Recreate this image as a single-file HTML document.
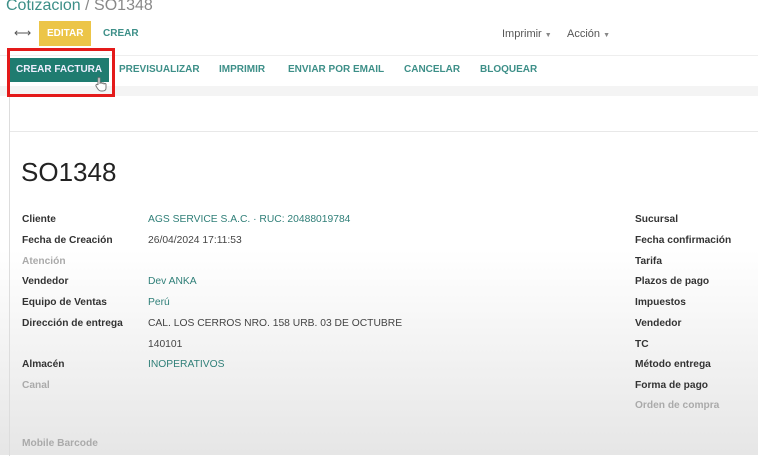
<!DOCTYPE html>
<html><head><meta charset="utf-8"><style>
body{margin:0;width:758px;height:455px;overflow:hidden;font-family:"Liberation Sans",sans-serif;background:linear-gradient(#fff 0,#fff 250px,#e6e6e6 455px);position:relative}
.a{position:absolute;white-space:nowrap}
.lbl{font-size:10.2px;font-weight:bold;color:#333}
.dim{color:#aaa}
.val{font-size:10.3px;color:#444}
.lnk{color:#2f7f78}
.tb{font-size:10px;font-weight:bold;color:#3d8f88}
</style></head><body>
<div class="a" style="left:6px;top:-3px;font-size:16px;color:#3d8f88">Cotizacion <span style="color:#888">/ SO1348</span></div>
<div class="a" style="left:14px;top:26px;font-size:12px;color:#555">⟷</div>
<div class="a" style="left:39px;top:21px;width:52px;height:25px;background:#ecc548"></div>
<div class="a" style="left:47px;top:28px;font-size:10px;font-weight:bold;color:#fff">EDITAR</div>
<div class="a tb" style="left:103px;top:28px">CREAR</div>
<div class="a" style="left:502px;top:28px;font-size:11px;color:#555">Imprimir <span style="font-size:7px;color:#888">▼</span></div>
<div class="a" style="left:567px;top:28px;font-size:11px;color:#555">Acción <span style="font-size:7px;color:#888">▼</span></div>
<div class="a" style="left:0;top:55px;width:758px;height:30px;background:#fff;border-top:1px solid #eee;border-bottom:1px solid #e4e4e4"></div>
<div class="a" style="left:0;top:86px;width:758px;height:10px;background:#f4f4f4"></div>
<div class="a" style="left:9px;top:96px;width:749px;height:360px;border-left:1px solid #ddd"></div>
<div class="a" style="left:10px;top:131px;width:748px;height:1px;background:#e8e8e8"></div>
<div class="a" style="left:10px;top:58px;width:99px;height:24px;background:#1f7c70"></div>
<div class="a" style="left:16px;top:64px;font-size:10px;font-weight:bold;color:#eef">CREAR FACTURA</div>
<div class="a" style="left:7px;top:48px;width:102px;height:43px;border:3px solid #e41a1a"></div>
<div class="a tb" style="left:119px;top:64px">PREVISUALIZAR</div>
<div class="a tb" style="left:219px;top:64px">IMPRIMIR</div>
<div class="a tb" style="left:288px;top:64px">ENVIAR POR EMAIL</div>
<div class="a tb" style="left:404px;top:64px">CANCELAR</div>
<div class="a tb" style="left:480px;top:64px">BLOQUEAR</div>
<svg class="a" style="left:94px;top:76px" width="14" height="16" viewBox="0 0 14 16"><path d="M4 9V2.5a1 1 0 0 1 2 0V8 M6 7.5a1 1 0 0 1 2 0V8 M8 8a1 1 0 0 1 2 0v.5 M10 8.5a1 1 0 0 1 2 0V12c0 2-1.5 3-3.5 3H7c-1.5 0-2.5-1-3.5-2.5L2 10a1 1 0 0 1 2-1" fill="#fff" stroke="#777" stroke-width="1"/></svg>
<div class="a" style="left:21px;top:157px;font-size:26px;color:#222">SO1348</div>
<div class="a lbl" style="left:22px;top:214px">Cliente</div>
<div class="a lbl" style="left:22px;top:235px">Fecha de Creación</div>
<div class="a lbl dim" style="left:22px;top:256px">Atención</div>
<div class="a lbl" style="left:22px;top:276px">Vendedor</div>
<div class="a lbl" style="left:22px;top:297px">Equipo de Ventas</div>
<div class="a lbl" style="left:22px;top:318px">Dirección de entrega</div>
<div class="a lbl" style="left:22px;top:359px">Almacén</div>
<div class="a lbl dim" style="left:22px;top:380px">Canal</div>
<div class="a lbl dim" style="left:22px;top:438px">Mobile Barcode</div>
<div class="a val lnk" style="left:148px;top:214px">AGS SERVICE S.A.C. · RUC: 20488019784</div>
<div class="a val" style="left:148px;top:235px">26/04/2024 17:11:53</div>
<div class="a val lnk" style="left:148px;top:276px">Dev ANKA</div>
<div class="a val lnk" style="left:148px;top:297px">Perú</div>
<div class="a val" style="left:148px;top:318px">CAL. LOS CERROS NRO. 158 URB. 03 DE OCTUBRE</div>
<div class="a val" style="left:148px;top:339px">140101</div>
<div class="a val lnk" style="left:148px;top:359px">INOPERATIVOS</div>
<div class="a lbl" style="left:635px;top:214px">Sucursal</div>
<div class="a lbl" style="left:635px;top:235px">Fecha confirmación</div>
<div class="a lbl" style="left:635px;top:256px">Tarifa</div>
<div class="a lbl" style="left:635px;top:276px">Plazos de pago</div>
<div class="a lbl" style="left:635px;top:297px">Impuestos</div>
<div class="a lbl" style="left:635px;top:318px">Vendedor</div>
<div class="a lbl" style="left:635px;top:339px">TC</div>
<div class="a lbl" style="left:635px;top:359px">Método entrega</div>
<div class="a lbl" style="left:635px;top:380px">Forma de pago</div>
<div class="a lbl dim" style="left:635px;top:400px">Orden de compra</div>
</body></html>
